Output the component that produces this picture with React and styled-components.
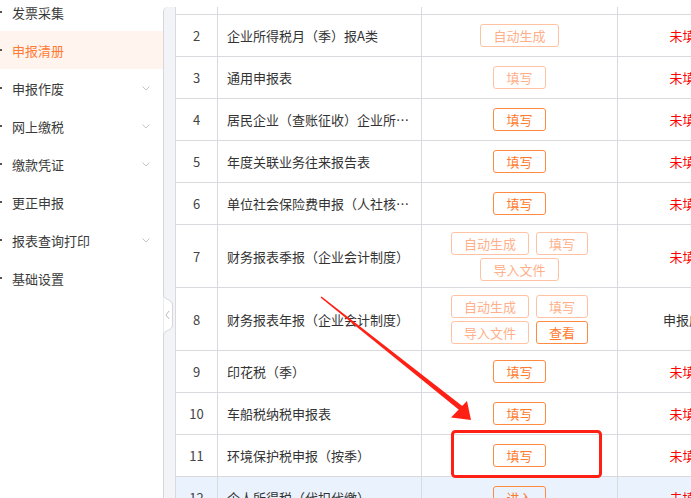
import React from "react";
import styled, { createGlobalStyle } from "styled-components";

const GlobalStyle = createGlobalStyle`
    html, body {
        margin: 0;
        padding: 0;
        background: #fff;
        overflow: hidden;
    }
    body {
        font-family: "Noto Sans CJK SC", "Noto Sans", sans-serif;
        font-size: 13px;
        color: #333;
    }
`;

const menu = [
    { label: "发票采集" },
    { label: "申报清册", active: true },
    { label: "申报作废", sub: true },
    { label: "网上缴税", sub: true },
    { label: "缴款凭证", sub: true },
    { label: "更正申报" },
    { label: "报表查询打印", sub: true },
    { label: "基础设置" },
];

const rows = [
    { no: 2, name: "企业所得税月（季）报A类", buttons: [["自动生成", false]], status: "未填写" },
    { no: 3, name: "通用申报表", buttons: [["填写", false]], status: "未填写" },
    { no: 4, name: "居民企业（查账征收）企业所得税年度申报", buttons: [["填写", true]], status: "未填写" },
    { no: 5, name: "年度关联业务往来报告表", buttons: [["填写", true]], status: "未填写" },
    { no: 6, name: "单位社会保险费申报（人社核定）", buttons: [["填写", true]], status: "未填写" },
    { no: 7, name: "财务报表季报（企业会计制度）", tall: true, buttons: [["自动生成", false], ["填写", false], ["导入文件", false]], status: "未填写" },
    { no: 8, name: "财务报表年报（企业会计制度）", tall: true, buttons: [["自动生成", false], ["填写", false], ["导入文件", false], ["查看", true]], status: "申报成功", ok: true },
    { no: 9, name: "印花税（季）", buttons: [["填写", true]], status: "未填写" },
    { no: 10, name: "车船税纳税申报表", buttons: [["填写", true]], status: "未填写" },
    { no: 11, name: "环境保护税申报（按季）", buttons: [["填写", true]], status: "未填写" },
    { no: 12, name: "个人所得税（代扣代缴）", buttons: [["进入", true]], status: "未填写", hover: true },
];

function Chevron() {
    return (
        <ChevronIcon width="8" height="5" viewBox="0 0 8 5">
            <path d="M0.5 0.5 L4 4 L7.5 0.5" fill="none" stroke="#c3c6cd" strokeWidth="1" />
        </ChevronIcon>
    );
}

function App() {
    return (
        <>
            <GlobalStyle />
            <Page>
                <Sidebar>
                    <Menu>
                        {menu.map((m) => (
                            <MenuItem key={m.label} $active={m.active}>
                                <span>{m.label}</span>
                                {m.sub && <Chevron />}
                            </MenuItem>
                        ))}
                    </Menu>
                </Sidebar>
                <Main>
                    <Panel>
                        <Handle width="12" height="40" viewBox="0 0 12 40">
                            <path d="M0.5 0 C0.5 5 9.5 4 9.5 10 L9.5 30 C9.5 36 0.5 35 0.5 40 Z" fill="#fff" />
                            <path d="M0.5 0 C0.5 5 9.5 4 9.5 10 L9.5 30 C9.5 36 0.5 35 0.5 40" fill="none" stroke="#d6d7dd" strokeWidth="1" />
                            <path d="M6 16 L3 20 L6 24" fill="none" stroke="#b8bbc3" strokeWidth="1" />
                        </Handle>
                        <TableWrap>
                            <Table>
                                {/* row 1 is scrolled out of view, only its bottom edge shows */}
                                <Row $edge>
                                    <NoCell />
                                    <NameCell />
                                    <ActionCell />
                                    <StatusCell />
                                </Row>
                                {rows.map((r) => (
                                    <Row key={r.no} $tall={r.tall} $hover={r.hover}>
                                        <NoCell>{r.no}</NoCell>
                                        <NameCell><span>{r.name}</span></NameCell>
                                        <ActionCell>
                                            <Buttons>
                                                {r.buttons.map(([text, on], i) => (
                                                    <Btn key={i} $on={on}>{text}</Btn>
                                                ))}
                                            </Buttons>
                                        </ActionCell>
                                        <StatusCell $ok={r.ok}>{r.status}</StatusCell>
                                    </Row>
                                ))}
                            </Table>
                        </TableWrap>
                    </Panel>
                </Main>
                <Marks width="691" height="498" viewBox="0 0 691 498">
                    <polygon
                        points="320.5,297.6 321.5,296.4 463.6,407.1 460.4,411.1"
                        fill="#ff2015"
                    />
                    <polygon points="451,417.5 467,401 471,420" fill="#ff2015" />
                    <rect x="452.5" y="431.5" width="148" height="45" rx="3" fill="none" stroke="#ff2015" strokeWidth="3" />
                </Marks>
            </Page>
        </>
    );
}

const Page = styled.div`
    position: relative;
    width: 691px;
    height: 498px;
    display: flex;
    overflow: hidden;
    background: #fff;
`;

const Sidebar = styled.aside`
    width: 163px;
    flex: none;
    overflow: hidden;
    background: #fff;
`;

const Menu = styled.ul`
    list-style: none;
    margin: -7px 0 0;
    padding: 0;
`;

const MenuItem = styled.li`
    position: relative;
    height: 38px;
    display: flex;
    align-items: center;
    justify-content: space-between;
    padding: 0 13px 0 12px;
    font-size: 13px;
    color: ${(p) => (p.$active ? "#ff7b35" : "#3a3a3a")};
    background: ${(p) => (p.$active ? "#fff4ee" : "transparent")};
    &::before {
        content: "";
        position: absolute;
        left: 0;
        top: 18px;
        width: 2px;
        height: 2px;
        background: #555;
    }
`;

const ChevronIcon = styled.svg`
    display: block;
`;

const Main = styled.main`
    flex: 1;
    min-width: 0;
    padding-top: 7px;
    display: flex;
`;

const Panel = styled.div`
    position: relative;
    flex: 1;
    min-width: 0;
    display: flex;
    background: #f3f4f8;
    border-left: 1px solid #d6d7dd;
    border-top-left-radius: 5px;
    padding-left: 11px;
`;

const Handle = styled.svg`
    position: absolute;
    left: -1px;
    top: 288px;
`;

const TableWrap = styled.div`
    flex: 1;
    min-width: 0;
    overflow: hidden;
    background: #fff;
    border-left: 1px solid #d9d9de;
`;

const Table = styled.div`
    width: 585px;
`;

const Row = styled.div`
    display: grid;
    grid-template-columns: 42px 204px 196px 143px;
    height: ${(p) => (p.$edge ? "8px" : p.$tall ? "63px" : "42px")};
    background: ${(p) => (p.$hover ? "#eaf3fd" : "#fff")};
`;

const Cell = styled.div`
    box-sizing: border-box;
    display: flex;
    align-items: center;
    border-right: 1px solid #d9d9de;
    border-bottom: 1px solid #d9d9de;
    min-width: 0;
    font-size: 13px;
    color: #333;
`;

const NoCell = styled(Cell)`
    justify-content: center;
    color: #444;
`;

const NameCell = styled(Cell)`
    padding: 0 10px 0 9px;
    span {
        white-space: nowrap;
        overflow: hidden;
        text-overflow: ellipsis;
    }
`;

const ActionCell = styled(Cell)`
    justify-content: center;
`;

const Buttons = styled.div`
    display: flex;
    flex-wrap: wrap;
    justify-content: center;
    gap: 3px 7px;
    max-width: 200px;
`;

const Btn = styled.button`
    box-sizing: border-box;
    height: 23px;
    padding: 0 12px;
    border-radius: 3px;
    background: transparent;
    font-family: inherit;
    font-size: 13px;
    line-height: 21px;
    border: 1px solid ${(p) => (p.$on ? "#ff8a40" : "#ffc3a4")};
    color: ${(p) => (p.$on ? "#ff7a2c" : "#ffb08a")};
`;

const StatusCell = styled(Cell)`
    justify-content: center;
    color: ${(p) => (p.$ok ? "#333" : "#ff0000")};
`;

const Marks = styled.svg`
    position: absolute;
    left: 0;
    top: 0;
    pointer-events: none;
`;

export default App;
